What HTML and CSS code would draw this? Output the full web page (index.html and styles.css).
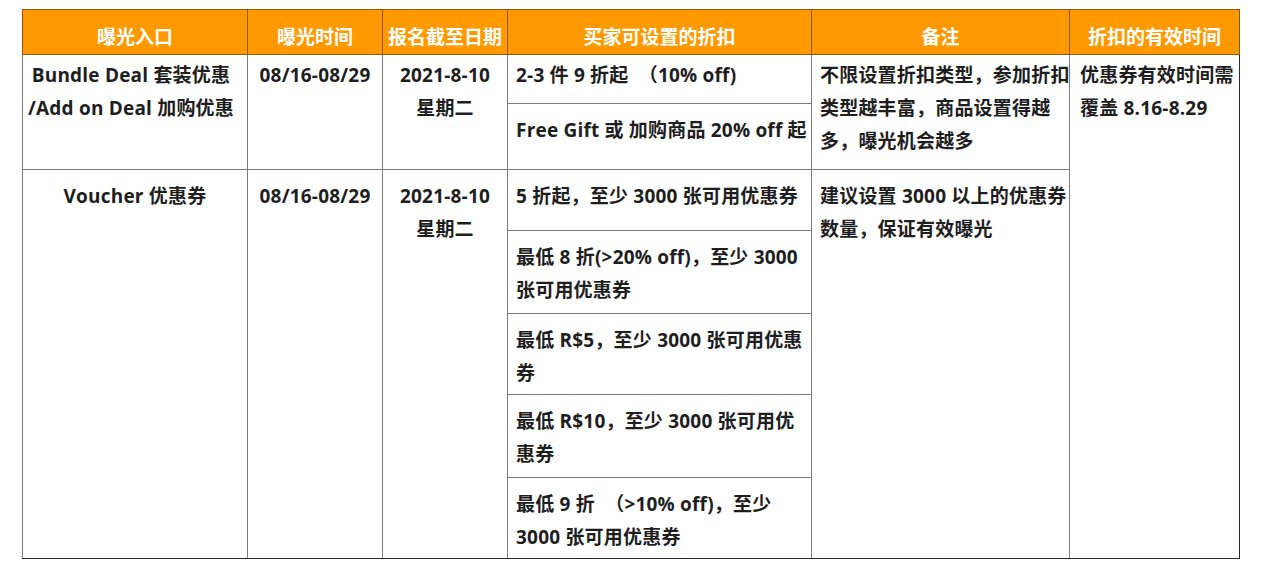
FILE: index.html
```html
<!DOCTYPE html>
<html lang="zh-CN">
<head>
<meta charset="utf-8">
<title>曝光入口</title>
<link rel="stylesheet" href="styles.css">
</head>
<body>
<table class="grid">
  <colgroup>
    <col class="c1"><col class="c2"><col class="c3"><col class="c4"><col class="c5"><col class="c6">
  </colgroup>
  <thead>
    <tr class="head">
      <th>曝光入口</th>
      <th>曝光时间</th>
      <th>报名截至日期</th>
      <th>买家可设置的折扣</th>
      <th>备注</th>
      <th>折扣的有效时间</th>
    </tr>
  </thead>
  <tbody>
    <tr class="r1a first">
      <td rowspan="2" class="center entry">Bundle Deal 套装优惠<br>/Add on Deal 加购优惠</td>
      <td rowspan="2" class="center">08/16-08/29</td>
      <td rowspan="2" class="center">2021-8-10<br>星期二</td>
      <td class="left">2-3 件 9 折起 &nbsp;（10% off)</td>
      <td rowspan="2" class="left">不限设置折扣类型，参加折扣<br>类型越丰富，商品设置得越<br>多，曝光机会越多</td>
      <td rowspan="7" class="left last">优惠券有效时间需<br>覆盖 8.16-8.29</td>
    </tr>
    <tr class="r1b">
      <td class="left">Free Gift 或 加购商品 20% off 起</td>
    </tr>
    <tr class="r2a">
      <td rowspan="5" class="center">Voucher 优惠券</td>
      <td rowspan="5" class="center">08/16-08/29</td>
      <td rowspan="5" class="center">2021-8-10<br>星期二</td>
      <td class="left">5 折起，至少 3000 张可用优惠券</td>
      <td rowspan="5" class="left">建议设置 3000 以上的优惠券<br>数量，保证有效曝光</td>
    </tr>
    <tr class="r2b">
      <td class="left">最低 8 折(&gt;20% off)，至少 3000<br>张可用优惠券</td>
    </tr>
    <tr class="r2c">
      <td class="left">最低 R$5，至少 3000 张可用优惠<br>券</td>
    </tr>
    <tr class="r2d">
      <td class="left">最低 R$10，至少 3000 张可用优<br>惠券</td>
    </tr>
    <tr class="r2e">
      <td class="left">最低 9 折 &nbsp;（&gt;10% off)，至少<br>3000 张可用优惠券</td>
    </tr>
  </tbody>
</table>
</body>
</html>
```
FILE: styles.css
```css
html, body {
  margin: 0;
  padding: 0;
  background: #ffffff;
}
body {
  padding: 9px 0 0 22px;
  font-family: "Open Sans", "Noto Sans CJK SC", sans-serif;
  font-weight: 700;
  font-size: 19px;
  color: #1e1e1e;
}
.grid {
  border-collapse: collapse;
  table-layout: fixed;
  width: 1217px;
  border: 1.5px solid #2a2a2a;
}
.c1 { width: 225px; }
.c2 { width: 135px; }
.c3 { width: 125px; }
.c4 { width: 304px; }
.c5 { width: 258px; }
.c6 { width: 170px; }

.head th {
  height: 35px;
  padding: 9px 0 0 0;
  background: #ff9900;
  color: #ffffff;
  font-weight: 700;
  font-size: 19px;
  line-height: 24px;
  text-align: center;
  vertical-align: middle;
  border: 1px solid #8a5a10;
  white-space: nowrap;
  overflow: hidden;
}
td {
  border: 1.5px solid #7c7c7c;
  vertical-align: top;
  line-height: 33px;
  padding: 10px 0 0 8px;
  white-space: nowrap;
  overflow: hidden;
  letter-spacing: 0.2px;
}
td.center {
  text-align: center;
  padding: 10px 0 0 0;
}
td.entry {
  padding-right: 8px;
}
td.left {
  text-align: left;
}
td.last {
  padding-left: 10px;
  border-right: 1.5px solid #2a2a2a;
}
tr.first td,
tr.first td.center,
tr.first td.left { padding-top: 4px; }
tr.r1a { height: 49px; }
tr.r1b { height: 66px; }
tr.r1b td { padding-top: 10px; }
tr.r2a { height: 61px; }
tr.r2b { height: 83px; }
tr.r2c { height: 81px; }
tr.r2d { height: 83px; }
tr.r2e { height: 81px; }
tbody tr:last-child td, td[rowspan="5"], td[rowspan="7"] {
  border-bottom-color: #2a2a2a;
}
```
